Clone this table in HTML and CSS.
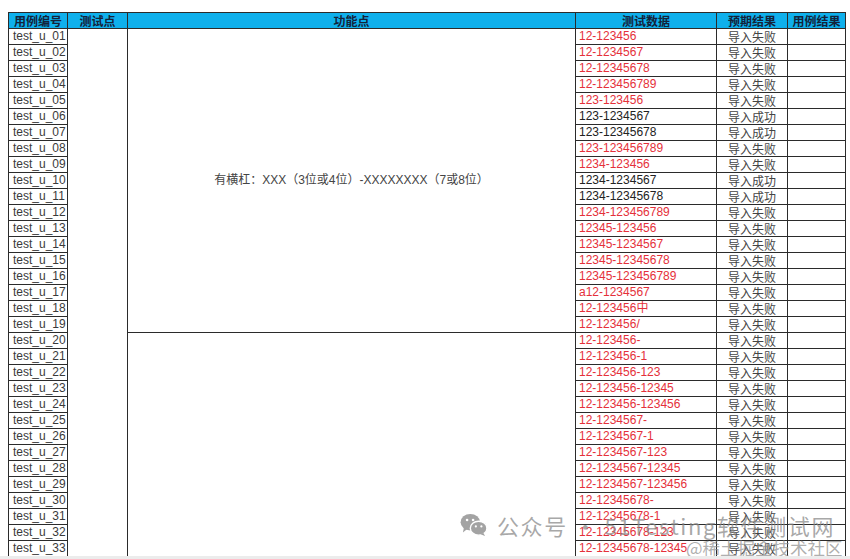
FILE: index.html
```html
<!DOCTYPE html>
<html lang="zh">
<head>
<meta charset="utf-8">
<link rel="stylesheet" href="styles.css">
</head>
<body>
<div class="page">
<table class="sheet">
<colgroup>
<col class="c-id"><col class="c-point"><col class="c-func"><col class="c-data"><col class="c-exp"><col class="c-res">
</colgroup>
<thead>
<tr><th>用例编号</th><th>测试点</th><th>功能点</th><th>测试数据</th><th>预期结果</th><th>用例结果</th></tr>
</thead>
<tbody>
<tr><td class="id">test_u_01</td><td class="point" rowspan="34"></td><td class="func" rowspan="19">有横杠：XXX（3位或4位）-XXXXXXXX（7或8位）</td><td class="data bad">12-123456</td><td class="exp">导入失败</td><td></td></tr>
<tr><td class="id">test_u_02</td><td class="data bad">12-1234567</td><td class="exp">导入失败</td><td></td></tr>
<tr><td class="id">test_u_03</td><td class="data bad">12-12345678</td><td class="exp">导入失败</td><td></td></tr>
<tr><td class="id">test_u_04</td><td class="data bad">12-123456789</td><td class="exp">导入失败</td><td></td></tr>
<tr><td class="id">test_u_05</td><td class="data bad">123-123456</td><td class="exp">导入失败</td><td></td></tr>
<tr><td class="id">test_u_06</td><td class="data">123-1234567</td><td class="exp">导入成功</td><td></td></tr>
<tr><td class="id">test_u_07</td><td class="data">123-12345678</td><td class="exp">导入成功</td><td></td></tr>
<tr><td class="id">test_u_08</td><td class="data bad">123-123456789</td><td class="exp">导入失败</td><td></td></tr>
<tr><td class="id">test_u_09</td><td class="data bad">1234-123456</td><td class="exp">导入失败</td><td></td></tr>
<tr><td class="id">test_u_10</td><td class="data">1234-1234567</td><td class="exp">导入成功</td><td></td></tr>
<tr><td class="id">test_u_11</td><td class="data">1234-12345678</td><td class="exp">导入成功</td><td></td></tr>
<tr><td class="id">test_u_12</td><td class="data bad">1234-123456789</td><td class="exp">导入失败</td><td></td></tr>
<tr><td class="id">test_u_13</td><td class="data bad">12345-123456</td><td class="exp">导入失败</td><td></td></tr>
<tr><td class="id">test_u_14</td><td class="data bad">12345-1234567</td><td class="exp">导入失败</td><td></td></tr>
<tr><td class="id">test_u_15</td><td class="data bad">12345-12345678</td><td class="exp">导入失败</td><td></td></tr>
<tr><td class="id">test_u_16</td><td class="data bad">12345-123456789</td><td class="exp">导入失败</td><td></td></tr>
<tr><td class="id">test_u_17</td><td class="data bad">a12-1234567</td><td class="exp">导入失败</td><td></td></tr>
<tr><td class="id">test_u_18</td><td class="data bad">12-123456中</td><td class="exp">导入失败</td><td></td></tr>
<tr><td class="id">test_u_19</td><td class="data bad">12-123456/</td><td class="exp">导入失败</td><td></td></tr>
<tr><td class="id">test_u_20</td><td class="func" rowspan="15"></td><td class="data bad">12-123456-</td><td class="exp">导入失败</td><td></td></tr>
<tr><td class="id">test_u_21</td><td class="data bad">12-123456-1</td><td class="exp">导入失败</td><td></td></tr>
<tr><td class="id">test_u_22</td><td class="data bad">12-123456-123</td><td class="exp">导入失败</td><td></td></tr>
<tr><td class="id">test_u_23</td><td class="data bad">12-123456-12345</td><td class="exp">导入失败</td><td></td></tr>
<tr><td class="id">test_u_24</td><td class="data bad">12-123456-123456</td><td class="exp">导入失败</td><td></td></tr>
<tr><td class="id">test_u_25</td><td class="data bad">12-1234567-</td><td class="exp">导入失败</td><td></td></tr>
<tr><td class="id">test_u_26</td><td class="data bad">12-1234567-1</td><td class="exp">导入失败</td><td></td></tr>
<tr><td class="id">test_u_27</td><td class="data bad">12-1234567-123</td><td class="exp">导入失败</td><td></td></tr>
<tr><td class="id">test_u_28</td><td class="data bad">12-1234567-12345</td><td class="exp">导入失败</td><td></td></tr>
<tr><td class="id">test_u_29</td><td class="data bad">12-1234567-123456</td><td class="exp">导入失败</td><td></td></tr>
<tr><td class="id">test_u_30</td><td class="data bad">12-12345678-</td><td class="exp">导入失败</td><td></td></tr>
<tr><td class="id">test_u_31</td><td class="data bad">12-12345678-1</td><td class="exp">导入失败</td><td></td></tr>
<tr><td class="id">test_u_32</td><td class="data bad">12-12345678-123</td><td class="exp">导入失败</td><td></td></tr>
<tr><td class="id">test_u_33</td><td class="data bad">12-12345678-12345</td><td class="exp">导入失败</td><td></td></tr>
<tr><td class="id"></td><td class="data bad"></td><td class="exp"></td><td></td></tr>
</tbody>
</table>
<div class="wm-main">
<svg class="wm-logo" viewBox="0 0 30 26" width="28" height="24">
<ellipse cx="11" cy="10" rx="10.5" ry="9" fill="#a3a3a3"/>
<path d="M4 16 L3 21 L8 17 Z" fill="#a3a3a3"/>
<ellipse cx="20" cy="16.5" rx="9" ry="7.5" fill="#a3a3a3" stroke="#fff" stroke-width="1.5"/>
<path d="M25 21.5 L27 25 L22 23 Z" fill="#a3a3a3"/>
<circle cx="7.5" cy="7.5" r="1.4" fill="#fff"/>
<circle cx="14" cy="7.5" r="1.4" fill="#fff"/>
<circle cx="17" cy="14.5" r="1.2" fill="#fff"/>
<circle cx="23" cy="14.5" r="1.2" fill="#fff"/>
</svg>
<span class="wm-text">公众号 · 51Testing软件测试网</span>
</div>
<div class="wm-sub">@稀土掘金技术社区</div>
</div>
</body>
</html>
```
FILE: styles.css
```css
html, body {
  margin: 0;
  padding: 0;
  background: #ececec;
  overflow: hidden;
}
.page {
  position: relative;
  height: 556px;
  overflow: hidden;
  background: #fff;
  padding: 12px 0 0 8px;
  box-sizing: border-box;
}
.sheet {
  border-collapse: collapse;
  table-layout: fixed;
  width: 838px;
  font-family: "Liberation Sans", "Noto Sans CJK SC", sans-serif;
  font-size: 12px;
  color: #333;
}
.c-id { width: 59px; }
.c-point { width: 60px; }
.c-func { width: 448px; }
.c-data { width: 141px; }
.c-exp { width: 71px; }
.c-res { width: 58px; }
.sheet th, .sheet td {
  border: 1px solid #2b2b2b;
  height: 15px;
  padding: 0;
  line-height: 15px;
  white-space: nowrap;
  overflow: hidden;
}
.sheet th {
  background: #0fb0ec;
  color: #14233a;
  font-weight: bold;
  font-family: "Noto Sans CJK SC", sans-serif;
  font-size: 12px;
  text-align: center;
}
.sheet td.id { padding-left: 4px; color: #3a3a3a; }
.sheet td.point { vertical-align: middle; }
.sheet td.func {
  text-align: center;
  vertical-align: middle;
  color: #444;
}
.sheet td.data { padding-left: 3px; color: #222; }
.sheet td.data.bad { color: #e5303a; }
.sheet td.exp {
  text-align: center;
  font-family: "Noto Sans CJK SC", sans-serif;
  color: #444;
}
.wm-main {
  position: absolute;
  left: 460px;
  top: 511px;
  display: flex;
  align-items: center;
  gap: 9px;
  font-family: "Noto Sans CJK SC", sans-serif;
  font-size: 22px;
  line-height: 28px;
  color: rgba(135, 135, 135, 0.72);
  white-space: nowrap;
}
.wm-text { letter-spacing: 1.6px; }
.wm-sub {
  position: absolute;
  left: 686px;
  top: 538px;
  font-family: "Noto Sans CJK SC", sans-serif;
  font-size: 17.5px;
  line-height: 20px;
  color: rgba(140, 140, 140, 0.7);
  white-space: nowrap;
}
```
